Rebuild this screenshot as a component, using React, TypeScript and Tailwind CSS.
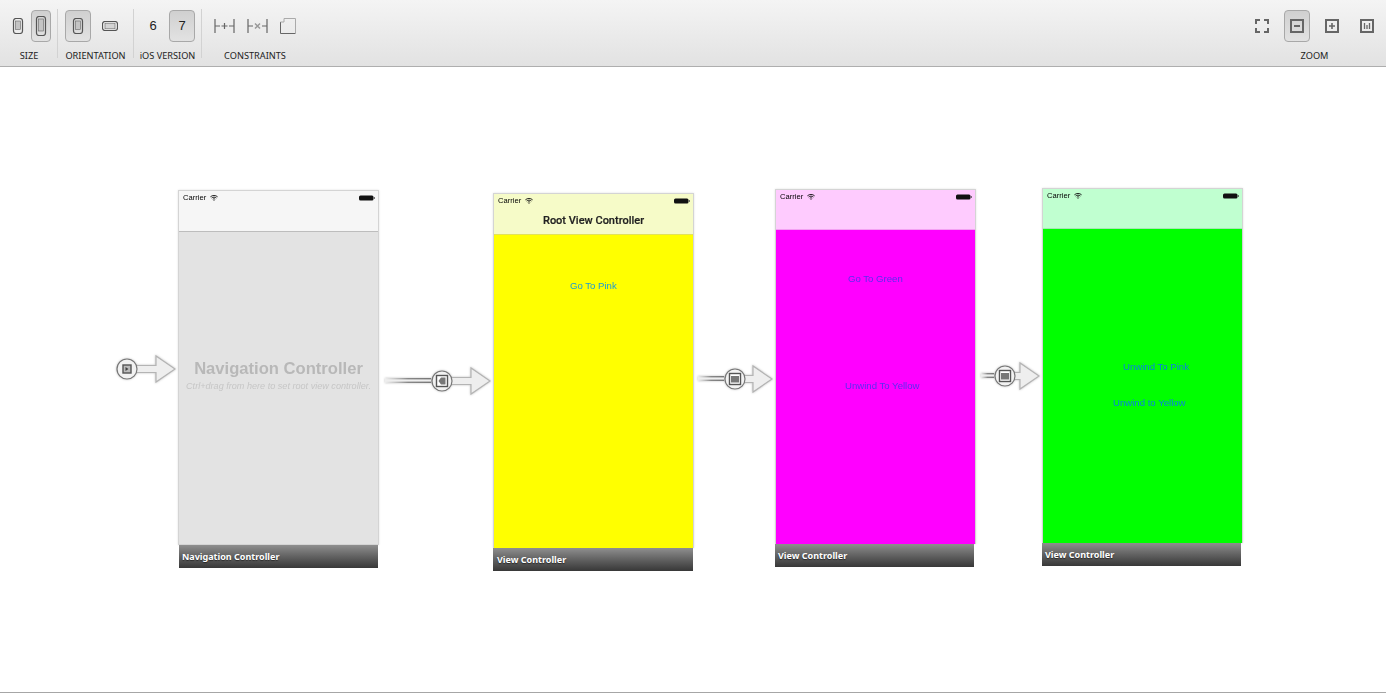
import React from 'react'

const sans = "font-['Liberation_Sans',Arial,sans-serif]"

function PhoneIcon({ tall = false }: { tall?: boolean }) {
  return (
    <svg width="12" height={tall ? 20 : 16} viewBox={tall ? '0 0 12 20' : '0 0 12 16'} fill="none" stroke="#555">
      <rect x="1.5" y="0.5" width="9" height={tall ? 19 : 15} rx="2.5" strokeWidth="1.2" />
      <rect x="3.5" y="3" width="5" height={tall ? 12 : 8.5} fill="#c4c4c4" stroke="#666" strokeWidth="0.6" />
    </svg>
  )
}

function LandscapeIcon() {
  return (
    <svg width="16" height="10" viewBox="0 0 16 10" fill="none" stroke="#555">
      <rect x="0.5" y="0.5" width="15" height="9" rx="2.5" strokeWidth="1.2" />
      <rect x="3" y="2.2" width="10" height="5.6" fill="#d4d4d4" stroke="#666" strokeWidth="0.6" />
    </svg>
  )
}

function ConstraintIcon({ mark }: { mark: 'plus' | 'x' }) {
  return (
    <svg width="21" height="14" viewBox="0 0 21 14" fill="none" stroke="#666" strokeWidth="1.2">
      <path d="M1 0v14M20 0v14M1 7h5M15 7h5" />
      {mark === 'plus' ? <path d="M7.5 7h6M10.5 4v6" /> : <path d="M8 4.5l5 5M13 4.5l-5 5" stroke="#999" strokeWidth="1.5" />}
    </svg>
  )
}

function FrameIcon() {
  return (
    <svg width="16" height="16" viewBox="0 0 16 16" fill="none" strokeWidth="1">
      <path d="M0.5 4v11.5h15" stroke="#666" />
      <path d="M0.5 4h3.5V0.5h11.5v15" stroke="#aaa" />
    </svg>
  )
}

function ZoomIcon({ kind }: { kind: 'fit' | 'minus' | 'plus' | 'bars' }) {
  if (kind === 'fit') {
    return (
      <svg width="14" height="14" viewBox="0 0 14 14" fill="none" stroke="#666" strokeWidth="2">
        <path d="M1 5V1h4M9 1h4v4M13 9v4H9M5 13H1V9" />
      </svg>
    )
  }
  return (
    <svg width="14" height="14" viewBox="0 0 14 14" fill="none" stroke="#666">
      <rect x="1" y="1" width="12" height="12" strokeWidth="2" />
      {kind === 'minus' && <path d="M4 7h6" strokeWidth="2" />}
      {kind === 'plus' && <path d="M4 7h6M7 4v6" strokeWidth="1.6" />}
      {kind === 'bars' && <path d="M4.5 4v6M7 6v4M9.5 4v6" strokeWidth="1.3" />}
    </svg>
  )
}

function ToolButton({ selected = false, wide = false, children }: { selected?: boolean; wide?: boolean; children?: React.ReactNode }) {
  return (
    <div
      className={`flex h-[32px] items-center justify-center rounded-[4px] border ${wide ? 'w-[26px]' : 'w-[20px]'} ${
        selected ? 'border-[#a8a8a8] bg-gradient-to-b from-[#d0d0d0] to-[#e2e2e2]' : 'border-transparent'
      }`}
    >
      {children}
    </div>
  )
}

function ToolGroup({ label, className, children }: { label: string; className: string; children: React.ReactNode }) {
  return (
    <div className={`mt-[9px] flex h-[49px] flex-col items-center pt-[1px] ${className}`}>
      <div className="flex h-[32px] shrink-0 items-center">{children}</div>
      <div className="mt-[8px] h-[11px] shrink-0 whitespace-nowrap text-[9.2px] leading-[11px] text-[#222] font-['Noto_Sans',sans-serif]">{label}</div>
    </div>
  )
}

function Toolbar() {
  return (
    <div className="flex h-[67px] shrink-0 justify-between border-b border-[#aeaeae] bg-gradient-to-b from-[#f4f4f4] to-[#e2e2e2]">
      <div className="flex">
        <ToolGroup label="SIZE" className="w-[58px] border-r border-[#d2d2d2] pl-[1px]">
          <div className="flex gap-[3px]">
            <ToolButton><PhoneIcon /></ToolButton>
            <ToolButton selected><PhoneIcon tall /></ToolButton>
          </div>
        </ToolGroup>
        <ToolGroup label="ORIENTATION" className="w-[76px] border-r border-[#d2d2d2]">
          <div className="-ml-[3px] flex gap-[6px]">
            <ToolButton selected wide><PhoneIcon /></ToolButton>
            <ToolButton wide><LandscapeIcon /></ToolButton>
          </div>
        </ToolGroup>
        <ToolGroup label="iOS VERSION" className="w-[68px] border-r border-[#d2d2d2]">
          <div className={`flex gap-[3px] text-[13px] text-[#222] ${sans}`}>
            <ToolButton wide>6</ToolButton>
            <ToolButton selected wide>7</ToolButton>
          </div>
        </ToolGroup>
        <ToolGroup label="CONSTRAINTS" className="w-[106px]">
          <div className="flex items-center gap-[12px]">
            <ConstraintIcon mark="plus" />
            <ConstraintIcon mark="x" />
            <FrameIcon />
          </div>
        </ToolGroup>
      </div>
      <ToolGroup label="ZOOM" className="pr-[6px]">
        <div className="flex gap-[9px]">
          <ToolButton wide><ZoomIcon kind="fit" /></ToolButton>
          <ToolButton selected wide><ZoomIcon kind="minus" /></ToolButton>
          <ToolButton wide><ZoomIcon kind="plus" /></ToolButton>
          <ToolButton wide><ZoomIcon kind="bars" /></ToolButton>
        </div>
      </ToolGroup>
    </div>
  )
}

function Wifi() {
  return (
    <svg width="8" height="6" viewBox="0 0 8 6" fill="none" stroke="#111" strokeWidth="0.9">
      <path d="M0.4 1.8C2.4 0 5.6 0 7.6 1.8M1.6 3C3 1.9 5 1.9 6.4 3M2.8 4.2C3.5 3.7 4.5 3.7 5.2 4.2" />
      <circle cx="4" cy="5.3" r="0.5" fill="#111" stroke="none" />
    </svg>
  )
}

function Battery() {
  return (
    <svg width="16" height="6" viewBox="0 0 16 6">
      <rect x="0" y="0.5" width="14.5" height="5" rx="1.5" fill="#111" />
      <rect x="14.8" y="2" width="1" height="2" fill="#555" />
    </svg>
  )
}

interface SceneProps {
  className: string
  frameClass: string
  barClass: string
  bodyClass: string
  footerClass: string
  title: string
  navTitle?: string
  children?: React.ReactNode
}

function Scene({ className, frameClass, barClass, bodyClass, footerClass, title, navTitle, children }: SceneProps) {
  return (
    <div className={`absolute w-[201px] ${className}`}>
      <div className={`flex h-[355px] flex-col border border-[#d4d4d4] shadow-[0_0_2px_rgba(0,0,0,0.12)] ${sans} ${frameClass}`}>
        <div className={`relative shrink-0 border-b ${barClass}`}>
          <div className="absolute left-[4px] right-[3px] top-[3px] flex items-center gap-[4px] text-[7.6px] leading-[8px] text-black blur-[0.2px]">
            <span>Carrier</span>
            <Wifi />
            <span className="ml-auto flex"><Battery /></span>
          </div>
          {navTitle && (
            <div className="absolute inset-x-0 top-[20px] text-center text-[11px] font-medium leading-[14px] text-[#222] blur-[0.2px] [-webkit-text-stroke:0.2px_#222] font-['Roboto',sans-serif]">
              {navTitle}
            </div>
          )}
        </div>
        <div className={`relative flex-1 ${bodyClass}`}>{children}</div>
      </div>
      <div className={`flex h-[23px] w-[199px] items-center bg-gradient-to-b from-[#8f8f8f] to-[#383838] pt-[1px] text-[9px] font-bold text-white [text-shadow:0_1px_1px_rgba(0,0,0,0.5)] font-['Noto_Sans',sans-serif] ${footerClass}`}>
        {title}
      </div>
    </div>
  )
}

function SceneButton({ className, label }: { className: string; label: string }) {
  return <div className={`absolute whitespace-nowrap text-[9.6px] leading-[12px] blur-[0.2px] ${className}`}>{label}</div>
}

// line + circle badge + hollow arrow head, drawn as one picture
function Segue({ className, lead, reach, badge }: { className: string; lead: number; reach: number; badge: 'entry' | 'push' | 'modal' }) {
  const cx = lead + 11
  const base = cx + reach
  const width = base + 20
  const fade = `fade-${badge}-${lead}`
  return (
    <svg className={`absolute drop-shadow-[0_0_1px_rgba(0,0,0,0.25)] ${className}`} width={width} height="30" viewBox={`0 0 ${width} 30`}>
      <defs>
        <linearGradient id={fade} x1="0" x2="1" y1="0" y2="0">
          <stop offset="0" stopColor="#999" stopOpacity="0" />
          <stop offset="0.5" stopColor="#888" />
          <stop offset="1" stopColor="#777" />
        </linearGradient>
      </defs>
      {badge !== 'entry' && <rect x="0" y="12" width={lead} height="5" fill="#eee" />}
      {badge !== 'entry' && <rect x="0" y="12" width={lead} height="1.4" fill={`url(#${fade})`} />}
      {badge !== 'entry' && <rect x="0" y="15.6" width={lead} height="1.4" fill={`url(#${fade})`} />}
      <path
        d={`M${cx} 11.5H${base}V2L${width - 1} 15L${base} 28V18.5H${cx}Z`}
        fill="#eeeeee"
        stroke="#b4b4b4"
        strokeWidth="1.2"
      />
      <circle cx={cx} cy="15" r="10" fill="#f2f2f2" stroke="#777" strokeWidth="1.2" />
      {badge === 'entry' ? (
        <>
          <rect x={cx - 4} y="11" width="8" height="8" fill="#bbb" stroke="#555" strokeWidth="1.4" />
          <path d={`M${cx - 1.5} 13l3 2-3 2z`} fill="#444" />
        </>
      ) : (
        <>
          <rect x={cx - 5.5} y="9.5" width="11" height="11" fill="#fff" stroke="#555" strokeWidth="1.4" />
          {badge === 'push' ? (
            <path d={`M${cx + 3.5} 11.5V18.5H${cx - 1}L${cx - 3.5} 15L${cx - 1} 11.5Z`} fill="#777" />
          ) : (
            <rect x={cx - 4} y="12" width="8" height="6.5" fill="#777" />
          )}
        </>
      )}
    </svg>
  )
}

export default function App() {
  return (
    <div className="flex h-[693px] w-[1386px] flex-col overflow-hidden bg-white">
      <Toolbar />
      <div className="relative flex-1 border-b border-[#a6a6a6]">
        <Segue className="left-[116px] top-[287px]" lead={0} reach={29} badge="entry" />
        <Scene
          className="left-[178px] top-[123px]"
          frameClass=""
          barClass="h-[41px] border-[#bdbdbd] bg-[#f6f6f6]"
          bodyClass="bg-[#e3e3e3]"
          footerClass="ml-[1px] pl-[3px]"
          title="Navigation Controller"
        >
          <div className="absolute inset-x-0 top-[126px] text-center text-[16.6px] font-bold leading-[22px] text-[#b8b8b8] blur-[0.3px]">
            Navigation Controller
          </div>
          <div className="absolute inset-x-0 top-[148px] text-center text-[9.1px] italic leading-[12px] text-[#c6c6c6] blur-[0.2px]">
            Ctrl+drag from here to set root view controller.
          </div>
        </Scene>

        <Segue className="left-[385px] top-[299px]" lead={46} reach={29} badge="push" />
        <Scene
          className="left-[493px] top-[126px]"
          frameClass="border-b-0"
          barClass="h-[41px] border-[#e2e25a] bg-[#f6fbc8]"
          bodyClass="bg-[#ffff00]"
          footerClass="w-[200px] pl-[4px]"
          title="View Controller"
          navTitle="Root View Controller"
        >
          <SceneButton className="left-[76px] top-[45px] text-[#1b9bd6]" label="Go To Pink" />
        </Scene>

        <Segue className="left-[698px] top-[297px]" lead={26} reach={18} badge="modal" />
        <Scene
          className="left-[775px] top-[122px]"
          frameClass="border-b-0"
          barClass="h-[40px] border-[#f3a0f3] bg-[#fecbfe]"
          bodyClass="bg-[#ff00ff]"
          footerClass="pl-[3px]"
          title="View Controller"
        >
          <SceneButton className="left-[72px] top-[43px] text-[#5a2cf0]" label="Go To Green" />
          <SceneButton className="left-[69px] top-[150px] text-[#5a2cf0]" label="Unwind To Yellow" />
        </Scene>

        <Segue className="left-[981px] top-[294px]" lead={13} reach={15} badge="modal" />
        <Scene
          className="left-[1042px] top-[121px]"
          frameClass="border-b-0"
          barClass="h-[40px] border-[#a4e6b4] bg-[#c0ffd0]"
          bodyClass="bg-[#00ff00]"
          footerClass="pl-[3px]"
          title="View Controller"
        >
          <SceneButton className="left-[80px] top-[132px] text-[#0a80e0]" label="Unwind To Pink" />
          <SceneButton className="left-[70px] top-[168px] text-[#0a80e0]" label="Unwind to Yellow" />
        </Scene>
      </div>
    </div>
  )
}
